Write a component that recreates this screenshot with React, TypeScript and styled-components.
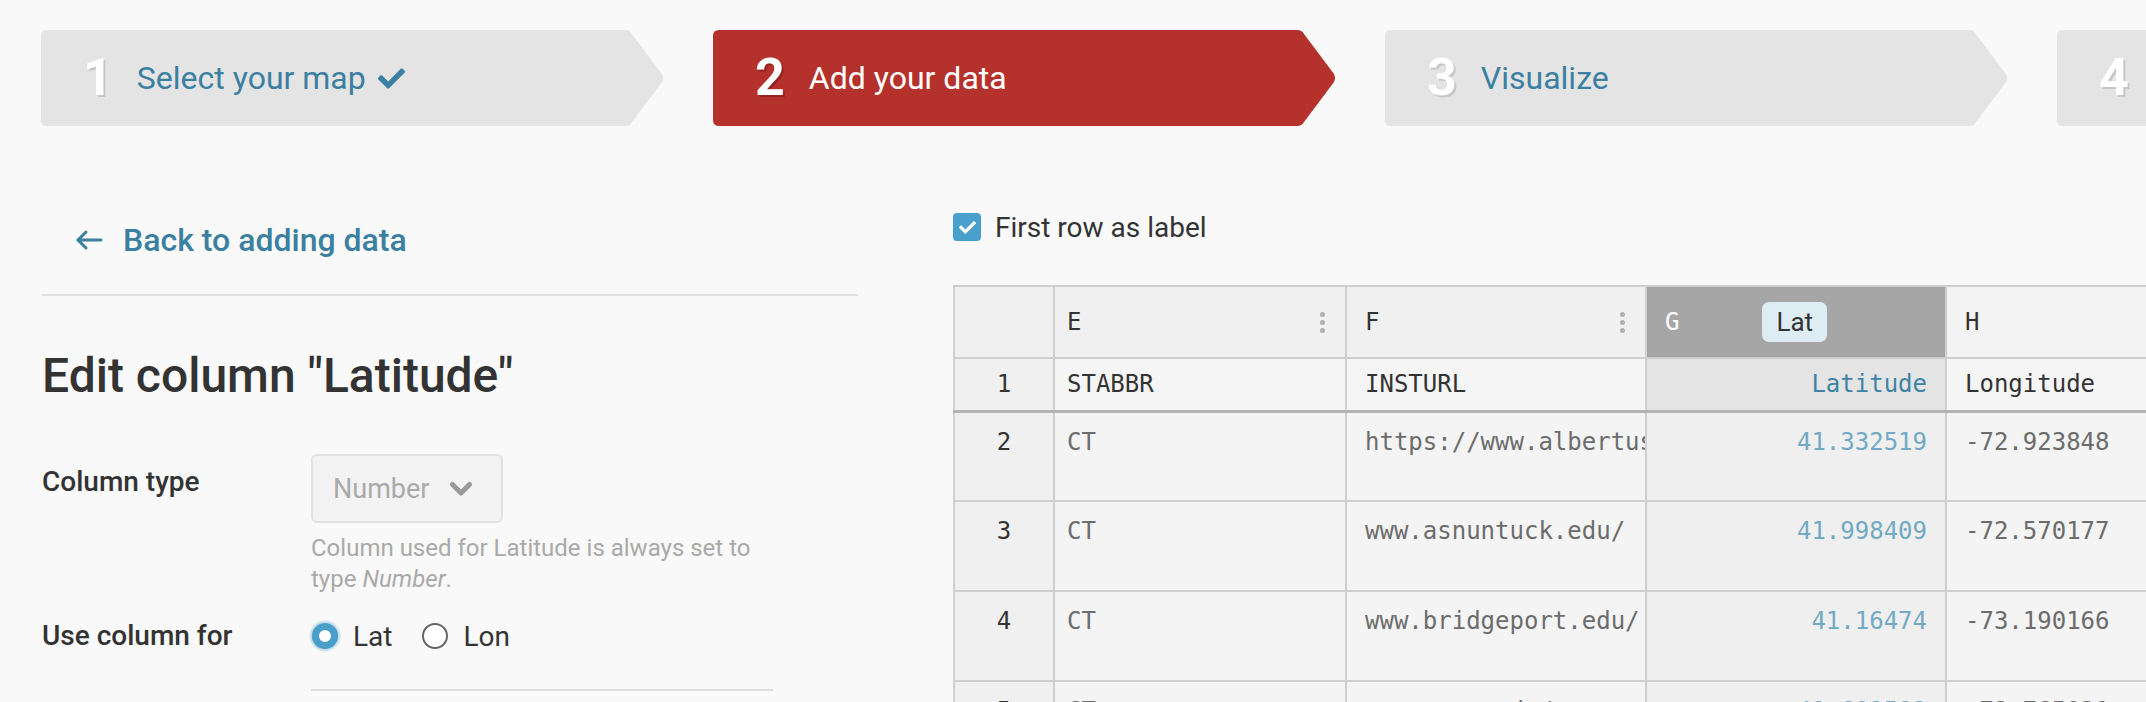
import React from "react";
import styled, { createGlobalStyle, css } from "styled-components";
import { FaCheck } from "react-icons/fa";

const GlobalStyle = createGlobalStyle`
  html, body {
    margin: 0;
    padding: 0;
    background: #f9f9f9;
    overflow: hidden;
  }
  body {
    width: 2146px;
    height: 702px;
    font-family: Roboto, "Noto Sans", Arial, sans-serif;
    color: #333;
  }
  * { box-sizing: border-box; }
`;

const BLUE = "#3b7fa1";
const MONO = `"DejaVu Sans Mono", "Liberation Mono", monospace`;

/* ---------- Steps ---------- */
const StepBar = styled.nav`
  display: flex;
  gap: 48px;
  padding: 30px 0 0 41px;
  height: 126px;
`;

const Step = styled.div<{ $active?: boolean }>`
  flex: 0 0 624px;
  height: 96px;
  display: flex;
  align-items: center;
  padding-left: 42px;
  background: ${(p) => (p.$active ? "#b5312b" : "#e4e4e4")};
  clip-path: path(
    "M6 0 H584 Q589 0 591 4 L621 44 Q623 48 621 52 L591 92 Q589 96 584 96 H6 Q0 96 0 90 V6 Q0 0 6 0 Z"
  );
`;

const StepNum = styled.span<{ $active?: boolean }>`
  font-size: 52px;
  font-weight: 700;
  line-height: 1;
  color: #fff;
  margin-right: 24px;
  text-shadow: 2px 2px 0 ${(p) => (p.$active ? "rgba(90,10,10,0.35)" : "rgba(0,0,0,0.13)")};
`;

const StepLabel = styled.span<{ $active?: boolean }>`
  font-size: 32px;
  font-weight: 400;
  white-space: nowrap;
  color: ${(p) => (p.$active ? "#fff" : BLUE)};
  display: flex;
  align-items: center;
  gap: 12px;
`;

/* ---------- Main ---------- */
const Main = styled.main`
  display: flex;
  gap: 95px;
  padding-left: 42px;
`;

const LeftPanel = styled.section`
  flex: 0 0 816px;
`;

const RightPanel = styled.section`
  flex: 0 0 auto;
  padding-top: 81px;
`;

const BackLink = styled.a`
  display: flex;
  align-items: center;
  gap: 20px;
  height: 40px;
  margin-top: 94px;
  padding-left: 33px;
  font-size: 32px;
  font-weight: 500;
  color: ${BLUE};
  text-decoration: none;
`;

const Divider = styled.hr`
  margin: 34px 0 0;
  border: 0;
  border-top: 2px solid #e1e1e1;
`;

const Title = styled.h1`
  margin: 52px 0 0;
  font-size: 48px;
  font-weight: 500;
  line-height: 56px;
  color: #333;
`;

const FormRow = styled.div<{ $gap: number }>`
  display: grid;
  grid-template-columns: 269px 1fr;
  margin-top: ${(p) => p.$gap}px;
`;

const FieldLabel = styled.div<{ $offset?: number }>`
  font-size: 28px;
  font-weight: 500;
  line-height: 40px;
  color: #333;
  margin-top: ${(p) => p.$offset ?? 0}px;
`;

const SelectBox = styled.div`
  width: 192px;
  height: 69px;
  display: flex;
  align-items: center;
  gap: 20px;
  padding-left: 20px;
  border: 2px solid #e2e2e2;
  border-radius: 6px;
  background: #f3f3f3;
  color: #aaa;
  font-size: 27px;
`;

const HelpText = styled.p`
  margin: 10px 0 0;
  max-width: 450px;
  font-size: 24px;
  line-height: 31px;
  color: #a9a9a9;
  em { font-style: italic; }
`;

const RadioGroup = styled.div`
  display: flex;
  align-items: center;
  height: 40px;
`;

const RadioOption = styled.label<{ $first?: boolean }>`
  display: flex;
  align-items: center;
  gap: 15px;
  font-size: 28px;
  color: #333;
  margin-left: ${(p) => (p.$first ? 1 : 30)}px;
`;

const RadioDot = styled.span<{ $checked?: boolean }>`
  width: 26px;
  height: 26px;
  border-radius: 50%;
  display: inline-block;
  ${(p) =>
    p.$checked
      ? css`
          background: #fff;
          border: 7px solid #4a9fca;
          box-shadow: 0 0 2px 2px rgba(74, 159, 202, 0.35);
        `
      : css`
          background: #fff;
          border: 2px solid #666;
        `}
`;

const ControlRule = styled.div`
  margin: 33px 0 0 269px;
  width: 462px;
  border-top: 2px solid #dedede;
`;

/* ---------- Right ---------- */
const CheckRow = styled.label`
  display: flex;
  align-items: center;
  gap: 14px;
  height: 40px;
  font-size: 28px;
  color: #333;
`;

const CheckBox = styled.span`
  width: 28px;
  height: 28px;
  border-radius: 4px;
  background: #4aa0cc;
  display: inline-flex;
  align-items: center;
  justify-content: center;
`;

const Table = styled.table`
  margin-top: 38px;
  border-collapse: collapse;
  table-layout: fixed;
  width: 1392px;
  font-family: ${MONO};
  font-size: 24px;
`;

type ColKind = "num" | "text" | "lat" | "plain";

const HeadCell = styled.th<{ $kind?: ColKind; $tight?: boolean }>`
  height: 72px;
  border: 2px solid #cfcfcf;
  padding: 0 20px 0 ${(p) => (p.$tight ? 12 : 18)}px;
  text-align: left;
  font-weight: 400;
  color: ${(p) => (p.$kind === "lat" ? "#fff" : "#333")};
  background: ${(p) => (p.$kind === "lat" ? "#a6a6a6" : p.$kind === "plain" ? "#f3f3f3" : "#f0f0f0")};
`;

const HeadInner = styled.div`
  display: flex;
  align-items: center;
  justify-content: space-between;
`;

const Kebab = styled.span`
  display: flex;
  flex-direction: column;
  gap: 3px;
  i {
    width: 5px;
    height: 5px;
    border-radius: 50%;
    background: #b0b0b0;
  }
`;

const Badge = styled.span`
  font-family: Roboto, "Noto Sans", sans-serif;
  font-size: 26px;
  color: #333;
  background: #deedf4;
  border-radius: 7px;
  padding: 0 14px;
  height: 40px;
  line-height: 40px;
`;

const Spacer = styled.span`
  width: 15px;
`;

const LabelCell = styled.td<{ $kind: ColKind; $tight?: boolean }>`
  height: 53px;
  border: 2px solid #cfcfcf;
  border-bottom: 3px solid #b3b3b3;
  padding: 0 18px 0 ${(p) => (p.$tight ? 12 : 18)}px;
  white-space: nowrap;
  overflow: hidden;
  text-align: ${(p) => (p.$kind === "num" ? "center" : p.$kind === "lat" ? "right" : "left")};
  color: ${(p) => (p.$kind === "lat" ? "#3d83a6" : "#333")};
  background: ${(p) => (p.$kind === "lat" ? "#e4e4e4" : p.$kind === "num" ? "#f0f0f0" : "#f5f5f5")};
`;

const DataCell = styled.td<{ $kind: ColKind; $tight?: boolean }>`
  height: 90px;
  border: 2px solid #cfcfcf;
  vertical-align: top;
  padding: 14px 18px 0 ${(p) => (p.$tight ? 12 : 18)}px;
  line-height: 30px;
  white-space: nowrap;
  overflow: hidden;
  text-align: ${(p) => (p.$kind === "num" ? "center" : p.$kind === "lat" ? "right" : "left")};
  color: ${(p) => (p.$kind === "lat" ? "#72a9c5" : p.$kind === "num" ? "#333" : "#6c6c6c")};
  background: ${(p) => (p.$kind === "lat" ? "#efefef" : p.$kind === "num" ? "#f0f0f0" : "#f4f4f4")};
`;

const rows = [
  ["2", "CT", "https://www.albertus.edu/", "41.332519", "-72.923848"],
  ["3", "CT", "www.asnuntuck.edu/", "41.998409", "-72.570177"],
  ["4", "CT", "www.bridgeport.edu/", "41.16474", "-73.190166"],
  ["5", "CT", "www.ccsu.edu/", "41.692582", "-72.765931"],
];

const Dots = () => (
  <Kebab>
    <i />
    <i />
    <i />
  </Kebab>
);

const Chevron = () => (
  <svg width="24" height="16" viewBox="0 0 24 16" fill="none" stroke="#9a9a9a" strokeWidth="5" strokeLinecap="round" strokeLinejoin="round">
    <path d="M3.5 3.5L12 12L20.5 3.5" />
  </svg>
);

export default function App() {
  return (
    <>
      <GlobalStyle />
      <StepBar>
        <Step>
          <StepNum>1</StepNum>
          <StepLabel>
            Select your map
            <FaCheck size={27} color={BLUE} />
          </StepLabel>
        </Step>
        <Step $active>
          <StepNum $active>2</StepNum>
          <StepLabel $active>Add your data</StepLabel>
        </Step>
        <Step>
          <StepNum>3</StepNum>
          <StepLabel>Visualize</StepLabel>
        </Step>
        <Step>
          <StepNum>4</StepNum>
          <StepLabel>Publish &amp; Embed</StepLabel>
        </Step>
      </StepBar>

      <Main>
        <LeftPanel>
          <BackLink href="#">
            <svg width="28" height="22" viewBox="0 0 28 22" fill="none" stroke={BLUE} strokeWidth="3" strokeLinecap="round" strokeLinejoin="round">
              <path d="M26 11H3" />
              <path d="M11 3L3 11L11 19" />
            </svg>
            Back to adding data
          </BackLink>
          <Divider />
          <Title>Edit column "Latitude"</Title>

          <FormRow $gap={50}>
            <FieldLabel $offset={8}>Column type</FieldLabel>
            <div>
              <SelectBox>
                Number
                <Chevron />
              </SelectBox>
              <HelpText>
                Column used for Latitude is always set to type <em>Number</em>.
              </HelpText>
            </div>
          </FormRow>

          <FormRow $gap={21}>
            <FieldLabel>Use column for</FieldLabel>
            <RadioGroup>
              <RadioOption $first>
                <RadioDot $checked />
                Lat
              </RadioOption>
              <RadioOption>
                <RadioDot />
                Lon
              </RadioOption>
            </RadioGroup>
          </FormRow>
          <ControlRule />
        </LeftPanel>

        <RightPanel>
          <CheckRow>
            <CheckBox>
              <FaCheck size={17} color="#fff" />
            </CheckBox>
            First row as label
          </CheckRow>

          <Table>
            <colgroup>
              <col style={{ width: 100 }} />
              <col style={{ width: 292 }} />
              <col style={{ width: 300 }} />
              <col style={{ width: 300 }} />
              <col style={{ width: 400 }} />
            </colgroup>
            <thead>
              <tr>
                <HeadCell $kind="num" />
                <HeadCell $tight>
                  <HeadInner>
                    E
                    <Dots />
                  </HeadInner>
                </HeadCell>
                <HeadCell>
                  <HeadInner>
                    F
                    <Dots />
                  </HeadInner>
                </HeadCell>
                <HeadCell $kind="lat">
                  <HeadInner>
                    G
                    <Badge>Lat</Badge>
                    <Spacer />
                  </HeadInner>
                </HeadCell>
                <HeadCell $kind="plain">H</HeadCell>
              </tr>
            </thead>
            <tbody>
              <tr>
                <LabelCell $kind="num">1</LabelCell>
                <LabelCell $kind="text" $tight>STABBR</LabelCell>
                <LabelCell $kind="text">INSTURL</LabelCell>
                <LabelCell $kind="lat">Latitude</LabelCell>
                <LabelCell $kind="text">Longitude</LabelCell>
              </tr>
              {rows.map((r) => (
                <tr key={r[0]}>
                  <DataCell $kind="num">{r[0]}</DataCell>
                  <DataCell $kind="text" $tight>{r[1]}</DataCell>
                  <DataCell $kind="text">{r[2]}</DataCell>
                  <DataCell $kind="lat">{r[3]}</DataCell>
                  <DataCell $kind="text">{r[4]}</DataCell>
                </tr>
              ))}
            </tbody>
          </Table>
        </RightPanel>
      </Main>
    </>
  );
}
